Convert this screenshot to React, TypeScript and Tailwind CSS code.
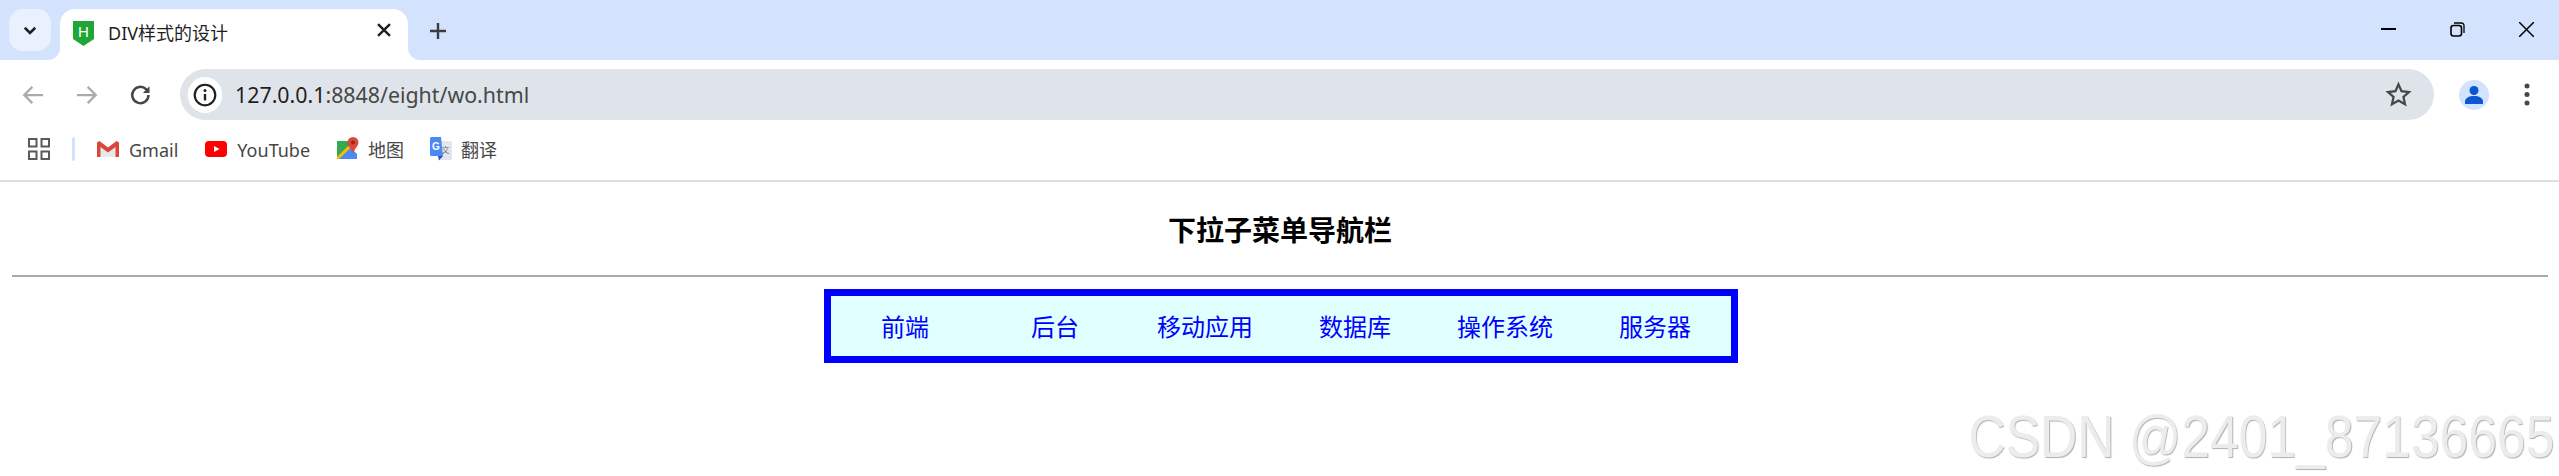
const NAV_ITEMS = ["前端", "后台", "移动应用", "数据库", "操作系统", "服务器"];

function ChromeIcon({ children, className }: { children: React.ReactNode; className: string }) {
  return (
    <svg viewBox="0 0 24 24" fill="none" className={className}>
      {children}
    </svg>
  );
}

function TabStrip() {
  return (
    <div className="flex h-[60px] shrink-0 items-start bg-[#d3e3fd]">
      <div className="ml-[9px] mt-[9px] flex h-[42px] w-[42px] items-center justify-center rounded-[14px] bg-[#e9f0fe]">
        <ChromeIcon className="h-[18px] w-[18px]">
          <path d="M5 9l7 7 7-7" stroke="#1f1f1f" strokeWidth="3.4" />
        </ChromeIcon>
      </div>
      <div className="relative ml-[9px] mt-[9px] flex h-[51px] w-[348px] items-center rounded-t-[15px] bg-white pb-[3px] pl-[13px]">
        <div className="absolute -left-3 bottom-0 h-3 w-3 bg-white">
          <div className="h-3 w-3 rounded-br-xl bg-[#d3e3fd]" />
        </div>
        <div className="absolute -right-3 bottom-0 h-3 w-3 bg-white">
          <div className="h-3 w-3 rounded-bl-xl bg-[#d3e3fd]" />
        </div>
        <svg viewBox="0 0 21 25" className="h-[25px] w-[21px]">
          <path d="M0 0h21v18l-10.500 7L0 18z" fill="#1fa636" />
          <text x="10.500" y="15.500" textAnchor="middle" fontSize="15" fill="#fff" fontFamily="Liberation Sans">H</text>
        </svg>
        <span className="ml-[14px] text-[18px] leading-6 text-[#1f1f1f]">DIV样式的设计</span>
        <ChromeIcon className="absolute left-[313px] top-[10px] h-[22px] w-[22px]">
          <path d="M5.500 5.500l13 13M18.500 5.500l-13 13" stroke="#1f1f1f" strokeWidth="2.600" />
        </ChromeIcon>
      </div>
      <ChromeIcon className="ml-[18px] mt-[19px] h-6 w-6">
        <path d="M12 4v16M4 12h16" stroke="#3c3c3c" strokeWidth="2.400" />
      </ChromeIcon>
      <div className="ml-auto mr-[25px] mt-[22px] flex items-start gap-[54px]">
        <svg viewBox="0 0 15 15" className="h-[15px] w-[15px]">
          <path d="M0 7h15" stroke="#000" strokeWidth="2" />
        </svg>
        <svg viewBox="0 0 15 15" className="h-[15px] w-[15px]">
          <rect x="1" y="3.500" width="10.500" height="10.500" rx="2.500" stroke="#000" strokeWidth="1.600" fill="none" />
          <path d="M4 1h7.500A2.500 2.500 0 0 1 14 3.500V11" stroke="#000" strokeWidth="1.300" fill="none" />
        </svg>
        <svg viewBox="0 0 15 15" className="h-[15px] w-[15px]">
          <path d="M0 0l15 15M15 0L0 15" stroke="#000" strokeWidth="1.500" />
        </svg>
      </div>
    </div>
  );
}

function Toolbar() {
  return (
    <div className="flex h-[60px] shrink-0 items-start rounded-t-xl bg-white">
      <div className="ml-[18px] mt-[20px] flex gap-[24px]">
        <ChromeIcon className="h-[30px] w-[30px]">
          <path d="M20 12H5M11.500 5.500L5 12l6.500 6.500" stroke="#ababab" strokeWidth="1.800" />
        </ChromeIcon>
        <ChromeIcon className="h-[30px] w-[30px]">
          <path d="M4 12h15M12.500 5.500L19 12l-6.500 6.500" stroke="#ababab" strokeWidth="1.800" />
        </ChromeIcon>
        <ChromeIcon className="h-[30px] w-[30px]">
          <path d="M18 12a6.500 6.500 0 1 1-2-4.700L18 9.300" stroke="#474747" strokeWidth="2" />
          <path d="M18.800 5v5.300h-5.300z" fill="#474747" />
        </ChromeIcon>
      </div>
      <div className="ml-[24px] mt-[9px] flex h-[51px] w-[2254px] flex-none items-center rounded-full bg-[#dfe4ea] pl-2">
        <div className="flex h-[36px] w-[34px] items-center justify-center rounded-full bg-white">
          <ChromeIcon className="h-[26px] w-[26px]">
            <circle cx="12" cy="12" r="9.500" stroke="#1f1f1f" strokeWidth="2" />
            <path d="M12 11v6" stroke="#1f1f1f" strokeWidth="2.200" />
            <circle cx="12" cy="7.800" r="1.400" fill="#1f1f1f" />
          </ChromeIcon>
        </div>
        <span className="ml-[13px] text-[21.350px] leading-7 text-[#474747]">
          <span className="text-[#1f1f1f]">127.0.0.1</span>:8848/eight/wo.html
        </span>
        <ChromeIcon className="ml-auto mr-[22px] h-[27px] w-[27px]">
          <path d="M12 3l2.700 6.100 6.600.7-4.900 4.400 1.400 6.500L12 17.400l-5.800 3.300 1.400-6.500-4.900-4.400 6.600-.7z" stroke="#474747" strokeWidth="2" strokeLinejoin="miter" />
        </ChromeIcon>
      </div>
      <div className="ml-[25px] mt-[20px] flex h-[30px] w-[30px] items-center justify-center rounded-full bg-[#d3e3fd]">
        <svg viewBox="0 0 20 20" className="h-[20px] w-[20px]">
          <circle cx="10" cy="5.500" r="4.500" fill="#0b57d0" />
          <path d="M1 19v-2.500C1 13 5 11 10 11s9 2 9 5.500V19z" fill="#0b57d0" />
        </svg>
      </div>
      <svg viewBox="0 0 6 24" className="ml-[35px] mt-[23px] h-[24px] w-[6px]">
        <circle cx="3" cy="3" r="2.500" fill="#474747" />
        <circle cx="3" cy="11.500" r="2.500" fill="#474747" />
        <circle cx="3" cy="20" r="2.500" fill="#474747" />
      </svg>
    </div>
  );
}

function BookmarkBar() {
  return (
    <div className="flex h-[62px] shrink-0 items-center border-b-2 border-[#e0e0e0] bg-white text-[18px] text-[#474747]">
      <svg viewBox="0 0 22 22" className="ml-[28px] -translate-y-px h-[22px] w-[22px]">
        <path d="M1 1h7.500v7.500H1zM13.500 1H21v7.500h-7.500zM1 13.500h7.500V21H1zM13.500 13.500H21V21h-7.500z" fill="none" stroke="#5a5a5a" strokeWidth="2" />
      </svg>
      <div className="ml-[22px] h-6 w-[3px] -translate-y-px rounded-sm bg-[#d3e3fd]" />
      <svg viewBox="0 0 22 16" className="ml-[22px] -translate-y-px h-4 w-[22px]">
        <path d="M1 1v15h20V1L11 9z" fill="#e8e8e8" />
        <path d="M0 16V1.500L2.500 0 11 6.500 19.500 0 22 1.500V16h-3.500V6L11 11.500 3.500 6v10z" fill="#d9473c" />
      </svg>
      <span className="ml-[10px] leading-6">Gmail</span>
      <svg viewBox="0 0 22 16" className="ml-[27px] -translate-y-px h-4 w-[22px]">
        <rect width="22" height="16" rx="4" fill="#f00" />
        <path d="M9 5l5.500 3L9 11z" fill="#fff" />
      </svg>
      <span className="ml-[10px] leading-6">YouTube</span>
      <svg viewBox="0 0 22 24" className="ml-[27px] -translate-y-px h-6 w-[22px]">
        <path d="M0 4h15v18H0z" fill="#35a853" />
        <path d="M0 22l13-12 7 7v5z" fill="#4a8af4" />
        <path d="M0 20L11 9l2.500 2L2 22H0z" fill="#fbbc05" />
        <path d="M16 0a5.500 5.500 0 0 1 5.500 5.500c0 3.500-4 6-5.500 11-1.500-5-5.500-7.500-5.500-11A5.500 5.500 0 0 1 16 0z" fill="#d94a3d" />
        <circle cx="16" cy="5.500" r="2" fill="#8e2a22" />
      </svg>
      <span className="ml-[9px] leading-6">地图</span>
      <svg viewBox="0 0 22 24" className="ml-[26px] -translate-y-px h-6 w-[22px]">
        <rect x="8" y="4" width="14" height="19" rx="1.500" fill="#e3e6ea" />
        <text x="15.500" y="16" textAnchor="middle" fontSize="8" fill="#70757a" fontFamily="Noto Sans CJK SC">文</text>
        <path d="M1.500 0H11l2 19H1.500A1.500 1.500 0 0 1 0 17.500v-16A1.500 1.500 0 0 1 1.500 0z" fill="#4a8af4" />
        <path d="M8 19h5l-4 4.500z" fill="#2a56c6" />
        <text x="6" y="12.500" textAnchor="middle" fontSize="10" fontWeight="700" fill="#fff" fontFamily="Liberation Sans">G</text>
      </svg>
      <span className="ml-[9px] leading-6">翻译</span>
    </div>
  );
}

export default function App() {
  return (
    <div className="relative flex h-[476px] w-[2559px] flex-col overflow-hidden bg-white font-['Noto_Sans','Noto_Sans_CJK_SC',sans-serif]">
      <TabStrip />
      <Toolbar />
      <BookmarkBar />

      <div className="pl-3 pr-[11px] font-['Noto_Sans_CJK_SC',sans-serif]">
        <h2 className="flex h-[93px] items-center justify-center text-[28px] font-bold text-black">下拉子菜单导航栏</h2>
        <hr className="border-0 border-t-2 border-[#a9a9a9]" />
        <ul className="ml-[812px] mt-[12px] flex w-[914px] border-[7px] border-[#0000ff] bg-[#e0ffff]">
          {NAV_ITEMS.map((item) => (
            <li key={item} className="flex h-[60px] w-[150px] items-center justify-center pr-[2px] text-[24px] text-[#0000ff]">
              {item}
            </li>
          ))}
        </ul>
      </div>

      <span className="absolute right-[5px] top-[402px] origin-right scale-x-[0.86] font-['Liberation_Sans',sans-serif] text-[60px] leading-[69px] whitespace-nowrap text-[#ececec] [text-shadow:1px_1px_1px_#b0b0b0]">
        CSDN @2401_87136665
      </span>
    </div>
  );
}
